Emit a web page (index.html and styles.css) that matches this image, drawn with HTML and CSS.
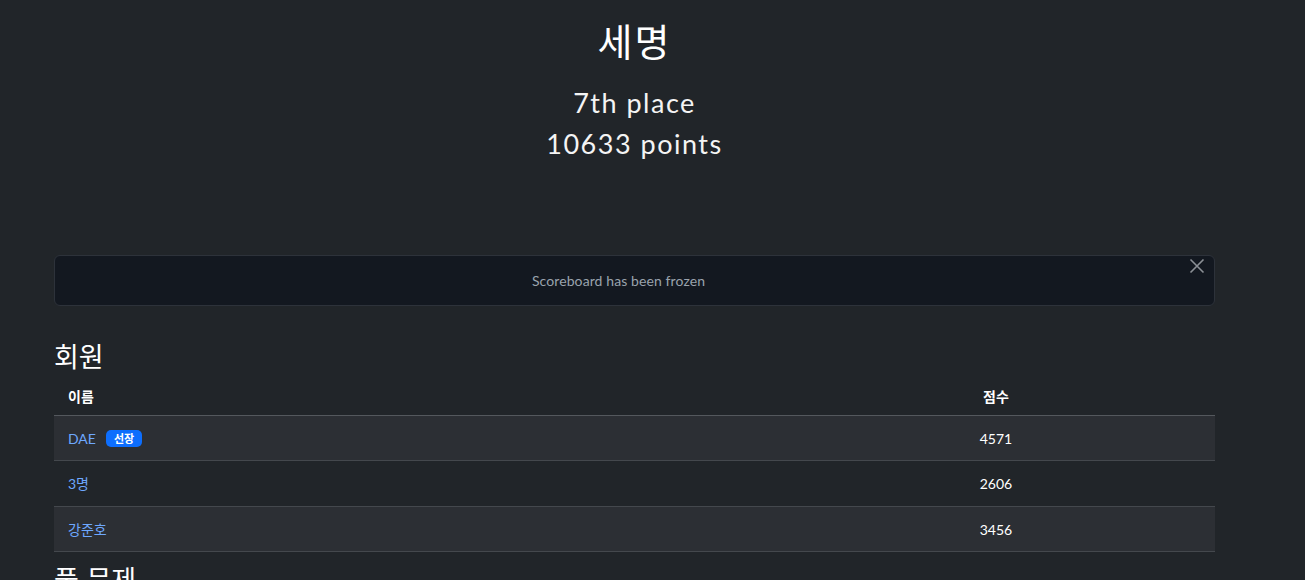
FILE: index.html
```html
<!DOCTYPE html>
<html lang="ko">
<head>
<meta charset="utf-8">
<title>세명</title>
<link rel="stylesheet" href="styles.css">
</head>
<body>
<div class="page">
  <header class="jumbotron">
    <h1 class="team-name">세명</h1>
    <h2 class="stat">7th place</h2>
    <h2 class="stat">10633 points</h2>
  </header>

  <div class="alert">
    <span class="alert-text">Scoreboard has been frozen</span>
    <button class="btn-close" aria-label="Close">
      <svg width="16" height="16" viewBox="0 0 16 16"><path d="M1.5 1.5 L14.5 14.5 M14.5 1.5 L1.5 14.5" stroke="#8c9096" stroke-width="1.6" fill="none"/></svg>
    </button>
  </div>

  <h3 class="section-title">회원</h3>
  <table class="members">
    <thead>
      <tr><th class="col-name">이름</th><th class="col-score">점수</th></tr>
    </thead>
    <tbody>
      <tr class="odd"><td class="col-name"><a href="#">DAE</a><span class="badge">선장</span></td><td class="col-score">4571</td></tr>
      <tr><td class="col-name"><a href="#">3명</a></td><td class="col-score">2606</td></tr>
      <tr class="odd"><td class="col-name"><a href="#">강준호</a></td><td class="col-score">3456</td></tr>
    </tbody>
  </table>

  <h3 class="section-title next">풀 문제</h3>
</div>
</body>
</html>
```

FILE: styles.css
```css
html, body {
  margin: 0;
  padding: 0;
  background: #212529;
  color: #dee2e6;
  font-family: Lato, "Noto Sans CJK KR", sans-serif;
  overflow: hidden;
}
.page {
  width: 1161px;
  margin-left: 54px;
}
.jumbotron {
  padding-top: 16px;
  height: 255px;
  text-align: center;
  box-sizing: border-box;
}
.team-name {
  margin: 0 0 18px 0;
  font-family: "Noto Sans CJK KR", sans-serif;
  font-weight: 400;
  font-size: 38px;
  line-height: 48px;
  color: #ffffff;
  letter-spacing: 2px;
}
.stat {
  margin: 0;
  font-family: Lato, "Noto Sans CJK KR", sans-serif;
  font-weight: 400;
  font-size: 27px;
  line-height: 41px;
  letter-spacing: 1.5px;
  color: #f4f4f4;
}
.alert {
  position: relative;
  height: 51px;
  box-sizing: border-box;
  padding: 0 48px 0 16px;
  border: 1px solid #2d323a;
  border-radius: 6px;
  background: #131820;
  display: flex;
  align-items: center;
  justify-content: center;
}
.alert-text {
  font-size: 14px;
  letter-spacing: 0.1px;
  color: #9aa3ad;
}
.btn-close {
  position: absolute;
  top: 1px;
  right: 8px;
  width: 18px;
  height: 18px;
  padding: 0;
  border: 0;
  background: transparent;
  display: flex;
  align-items: center;
  justify-content: center;
}
.section-title {
  margin: 33px 0 5px 0;
  font-family: "Noto Sans CJK KR", sans-serif;
  font-weight: 400;
  font-size: 27px;
  line-height: 34px;
  color: #ffffff;
}
.section-title.next {
  margin-top: 10px;
}
.members {
  width: 100%;
  border-collapse: collapse;
  font-size: 14px;
}
.members th {
  padding: 8px 14px;
  line-height: 21px;
  font-weight: 700;
  color: #ffffff;
  text-align: left;
  border-bottom: 1px solid #54585d;
}
.members td {
  padding: 12px 14px 11.4px;
  line-height: 21px;
  border-bottom: 1px solid #44484d;
  color: #ffffff;
}
.members tr.odd td {
  background: #2c2f34;
}
.members .col-name {
  width: 695px;
}
.members .col-score {
  text-align: center;
}
.members a {
  color: #6ea8fe;
  text-decoration: none;
}
.badge {
  display: inline-block;
  margin-left: 10px;
  padding: 0 8px;
  height: 17px;
  line-height: 17px;
  border-radius: 5px;
  background: #0d6efd;
  color: #ffffff;
  font-size: 11px;
  font-weight: 700;
  vertical-align: 1px;
}
```
